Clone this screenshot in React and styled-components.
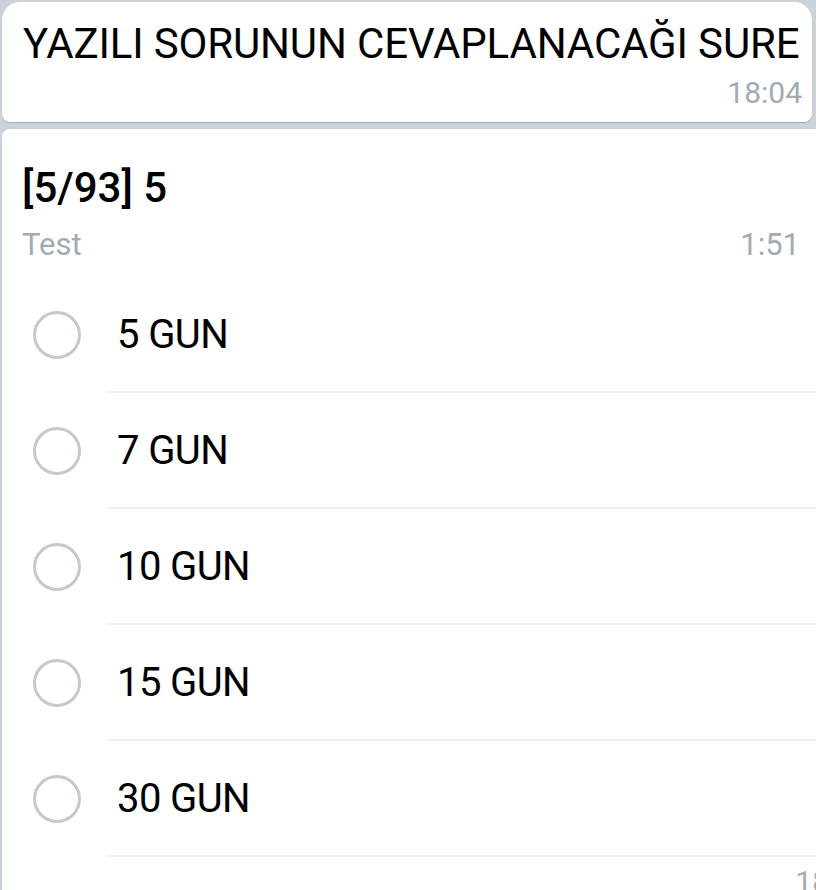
import React from "react";
import styled, { createGlobalStyle } from "styled-components";

const GlobalStyle = createGlobalStyle`
  html, body {
    margin: 0;
    padding: 0;
    overflow: hidden;
    background: #cad3da;
    font-family: Roboto, "Noto Sans", sans-serif;
  }
`;

const Screen = styled.div`
  width: 816px;
  height: 890px;
  overflow: hidden;
  display: flex;
  flex-direction: column;
  gap: 7px;
  padding-top: 2px;
  box-sizing: border-box;
`;

const Bubble = styled.div`
  margin-left: 2px;
  width: ${(p) => p.width}px;
  flex-shrink: 0;
  background: #ffffff;
  border-radius: ${(p) => p.radius};
  box-shadow: 0 1px 1px rgba(90, 105, 120, 0.35);
  box-sizing: border-box;
  padding-bottom: ${(p) => p.bottom || 0}px;
`;

const MessageText = styled.div`
  padding: 16px 10px 0 21px;
  font-size: 42px;
  line-height: 52px;
  color: #000;
  white-space: nowrap;
  letter-spacing: -0.15px;
`;

const Time = styled.div`
  text-align: right;
  font-size: 30px;
  line-height: 34px;
  color: #a2abb3;
  padding-right: ${(p) => p.right}px;
  margin-top: ${(p) => p.top}px;
`;

const PollHead = styled.div`
  padding: 34px 102px 0 20px;
`;

const Question = styled.div`
  font-size: 42px;
  line-height: 50px;
  font-weight: 500;
  color: #000;
`;

const MetaRow = styled.div`
  display: flex;
  justify-content: space-between;
  margin-top: 14px;
  font-size: 31px;
  line-height: 36px;
  color: #a2abb3;
`;

const Options = styled.div`
  margin-top: 14px;
`;

const Option = styled.div`
  display: flex;
  align-items: stretch;
`;

const RadioCell = styled.div`
  width: 105px;
  display: flex;
  align-items: center;
  padding-left: 31px;
  box-sizing: border-box;
`;

const Radio = styled.span`
  width: 48px;
  height: 48px;
  border-radius: 50%;
  border: 3px solid #c3c9ce;
  box-sizing: border-box;
`;

const Label = styled.div`
  flex: 1;
  height: 116px;
  box-sizing: border-box;
  display: flex;
  align-items: center;
  padding-left: 10px;
  border-bottom: 2px solid #eef1f3;
  font-size: 40px;
  color: #000;
  letter-spacing: -0.6px;
`;

const options = ["5 GUN", "7 GUN", "10 GUN", "15 GUN", "30 GUN"];

export default function App() {
  return (
    <>
      <GlobalStyle />
      <Screen>
        <Bubble width={810} radius="18px 18px 8px 8px" bottom={12}>
          <MessageText>YAZILI SORUNUN CEVAPLANACAĞI SURE</MessageText>
          <Time right={10} top={6}>18:04</Time>
        </Bubble>
        <Bubble width={900} radius="8px 18px 0 0">
          <PollHead>
            <Question>[5/93] 5</Question>
            <MetaRow>
              <span>Test</span>
              <span>1:51</span>
            </MetaRow>
          </PollHead>
          <Options>
            {options.map((o) => (
              <Option key={o}>
                <RadioCell>
                  <Radio />
                </RadioCell>
                <Label>{o}</Label>
              </Option>
            ))}
          </Options>
          <Time right={32} top={8}>18:04</Time>
        </Bubble>
      </Screen>
    </>
  );
}
